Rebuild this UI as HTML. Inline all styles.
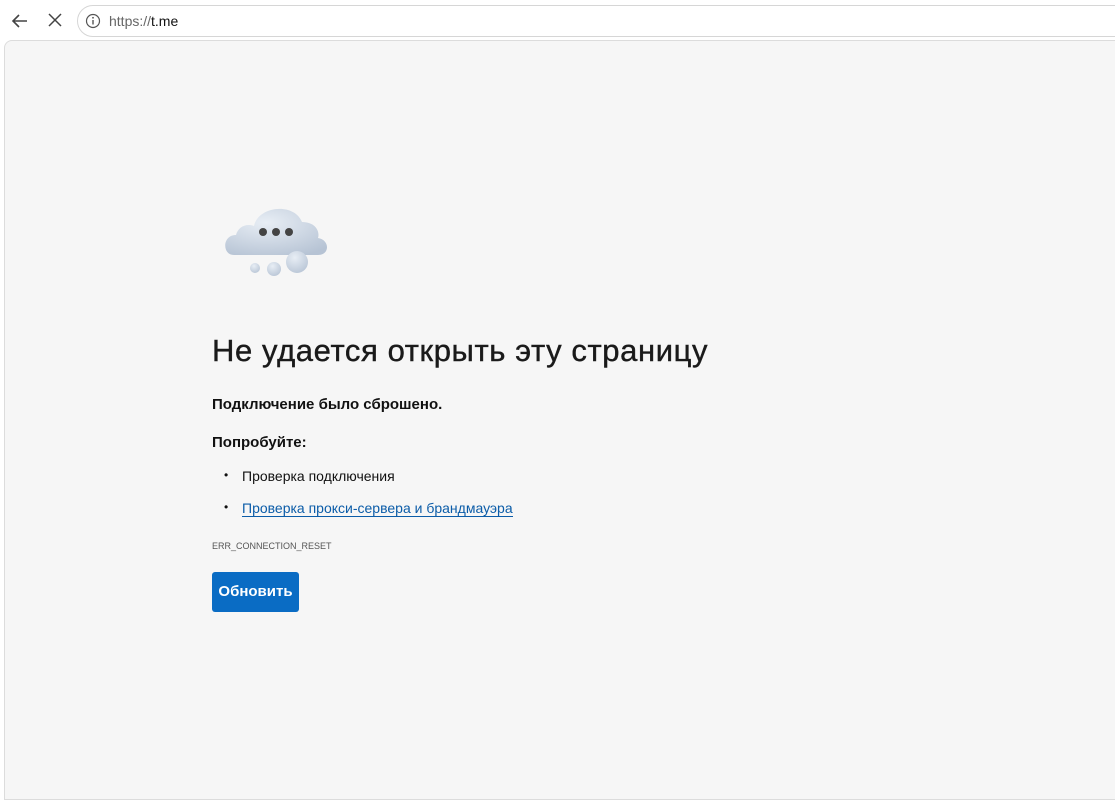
<!DOCTYPE html>
<html><head><meta charset="utf-8"><style>
*{margin:0;padding:0;box-sizing:border-box}
body{width:1115px;height:762px;background:#fff;font-family:"Liberation Sans","DejaVu Sans",sans-serif;overflow:hidden;position:relative}
.bar{position:absolute;left:0;top:0;width:1115px;height:40px;background:#fff}
.url{position:absolute;left:77px;top:5px;width:1060px;height:32px;border:1px solid #d6d6d6;border-radius:16px;background:#fff}
.url span{position:absolute;left:31px;top:7px;font-size:14px;color:#666}
.url b{font-weight:normal;color:#111}
.page{position:absolute;left:4px;top:40px;width:1120px;height:760px;background:#f6f6f6;border:1px solid #dcdcdc;border-radius:8px 0 0 0}
.a{position:absolute;left:212px}
h1{position:absolute;left:212px;top:333px;font-size:31px;font-weight:normal;color:#1a1a1a;letter-spacing:0.6px;-webkit-text-stroke:0.4px #1a1a1a}
.t{font-size:15px;color:#111;font-weight:bold}
.li{font-size:14px;color:#111}
.li:before{content:"•";position:absolute;left:-18px;font-size:12px}
.link{color:#0b5ca8;border-bottom:1px solid #0b5ca8}
.btn{position:absolute;left:212px;top:572px;width:87px;height:40px;background:#0a6cc4;border-radius:3px;color:#fff;font-weight:bold;font-size:15px;text-align:center;line-height:40px}
</style></head><body>
<div class="bar">
<svg style="position:absolute;left:10px;top:11px" width="20" height="20" viewBox="0 0 20 20"><path d="M17 10H3M9 4L3 10l6 6" stroke="#444" stroke-width="1.6" fill="none"/></svg>
<svg style="position:absolute;left:48px;top:13px" width="14" height="14" viewBox="0 0 14 14"><path d="M1 1L13 13M13 1L1 13" stroke="#444" stroke-width="1.5"/></svg>
<div class="url"><svg style="position:absolute;left:7px;top:7px" width="16" height="16" viewBox="0 0 16 16"><circle cx="8" cy="8" r="6.5" stroke="#555" stroke-width="1.2" fill="none"/><path d="M8 7v4.5" stroke="#555" stroke-width="1.4"/><circle cx="8" cy="4.8" r=".9" fill="#555"/></svg><span>https://<b>t.me</b></span></div>
</div>
<div class="page"></div>
<svg style="position:absolute;left:220px;top:195px" width="112" height="88" viewBox="0 0 112 88">
<defs><radialGradient id="g" cx="40%" cy="30%" r="80%"><stop offset="0" stop-color="#e8eef5"/><stop offset="1" stop-color="#b6c3d4"/></radialGradient></defs>
<path d="M14 60c-12 0-12-20 2-20 2-8 10-12 18-9 4-20 40-24 48-4 14 0 18 10 16 16 12 2 12 17 0 17z" fill="url(#g)"/>
<circle cx="77" cy="67" r="11" fill="url(#g)"/>
<circle cx="54" cy="74" r="7" fill="url(#g)"/>
<circle cx="35" cy="73" r="5" fill="url(#g)"/>
<circle cx="43" cy="37" r="4" fill="#444"/><circle cx="56" cy="37" r="4" fill="#444"/><circle cx="69" cy="37" r="4" fill="#444"/>
</svg>
<h1>Не удается открыть эту страницу</h1>
<div class="a t" style="top:396px">Подключение было сброшено.</div>
<div class="a t" style="top:434px">Попробуйте:</div>
<div class="a li" style="left:242px;top:468px">Проверка подключения</div>
<div class="a li" style="left:242px;top:500px"><span class="link">Проверка прокси-сервера и брандмауэра</span></div>
<div class="a" style="top:541px;font-size:9px;color:#555">ERR_CONNECTION_RESET</div>
<div class="btn">Обновить</div>
</body></html>
